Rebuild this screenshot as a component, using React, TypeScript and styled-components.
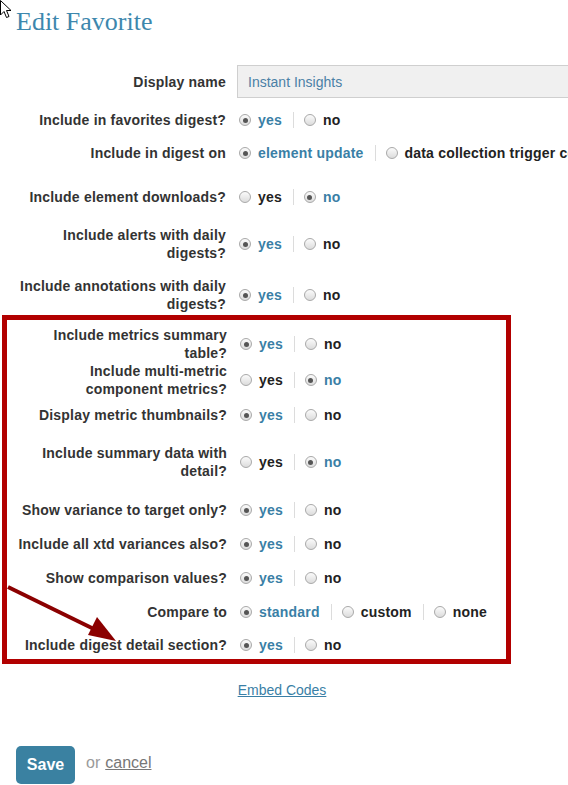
import styled, { createGlobalStyle } from 'styled-components';

const GlobalStyle = createGlobalStyle`
  html, body {
    margin: 0;
    padding: 0;
    background: #fff;
  }
  body {
    font-family: "Liberation Sans", Arial, sans-serif;
    color: #333;
  }
`;

const Page = styled.div`
  position: relative;
  width: 568px;
  height: 785px;
  overflow: hidden;
  background: #fff;
`;

const Title = styled.h1`
  margin: 0;
  padding: 6px 0 0 16px;
  font-family: "Liberation Serif", "Times New Roman", serif;
  font-weight: normal;
  font-size: 26px;
  line-height: 31px;
  color: #3d87ad;
`;

const Form = styled.div`
  margin-top: 28px;
`;

const Row = styled.div<{ $mt?: number; $inset?: boolean }>`
  display: grid;
  grid-template-columns: ${(p) => (p.$inset ? '220px' : '226px')} 1fr;
  align-items: center;
  margin-top: ${(p) => (p.$mt ?? 15)}px;
`;

const Label = styled.div<{ $inset?: boolean }>`
  box-sizing: border-box;
  padding-left: ${(p) => (p.$inset ? 6 : 12)}px;
  text-align: right;
  font-weight: bold;
  font-size: 14px;
  line-height: 18px;
  letter-spacing: 0.2px;
  color: #333;
`;

const Options = styled.div`
  display: flex;
  align-items: center;
  padding-left: 13px;
  white-space: nowrap;
  overflow: hidden;
`;

const Option = styled.label<{ $checked?: boolean }>`
  display: flex;
  align-items: center;
  font-weight: bold;
  font-size: 14px;
  line-height: 18px;
  letter-spacing: 0.2px;
  color: ${(p) => (p.$checked ? '#3a7fa6' : '#222')};
`;

const Radio = styled.span<{ $checked?: boolean }>`
  position: relative;
  box-sizing: border-box;
  width: 12px;
  height: 12px;
  margin-right: 7px;
  border-radius: 50%;
  border: 1px solid #a9a9a9;
  background: linear-gradient(#fbfbfb, #dcdcdc);
  &::after {
    content: '';
    display: ${(p) => (p.$checked ? 'block' : 'none')};
    position: absolute;
    left: 2.5px;
    top: 2.5px;
    width: 5px;
    height: 5px;
    border-radius: 50%;
    background: #555;
  }
`;

const Divider = styled.span`
  width: 1px;
  height: 16px;
  margin: 0 10px 0 11px;
  background: #dcdcdc;
`;

const TextInput = styled.div`
  box-sizing: border-box;
  margin-left: 11px;
  width: 360px;
  height: 33px;
  padding-left: 10px;
  display: flex;
  align-items: center;
  background: #f0f0f0;
  border: 1px solid #cfcfcf;
  font-size: 14px;
  color: #4a80a6;
`;

const Highlight = styled.div`
  box-sizing: border-box;
  margin: 2px 0 0 2px;
  width: 509px;
  border: 5px solid #b20000;
  padding-bottom: 5px;
`;

const EmbedLink = styled.a`
  display: block;
  margin: 17px 0 0 0;
  padding-right: 4px;
  text-align: center;
  font-size: 14px;
  line-height: 18px;
  color: #3a7fa6;
  text-decoration: underline;
`;

const Actions = styled.div`
  display: flex;
  align-items: center;
  margin: 47px 0 0 16px;
`;

const SaveButton = styled.button`
  width: 59px;
  height: 38px;
  margin-right: 11px;
  border: none;
  border-radius: 5px;
  background: #3a81a1;
  color: #fff;
  font-family: "Liberation Sans", Arial, sans-serif;
  font-weight: bold;
  font-size: 16px;
`;

const CancelText = styled.span`
  margin-bottom: 5px;
  font-size: 16px;
  color: #9a9a9a;
`;

const CancelLink = styled.a`
  margin-left: 5px;
  color: #777;
  text-decoration: underline;
`;

const Overlay = styled.svg`
  position: absolute;
  left: 0;
  top: 0;
  pointer-events: none;
`;

type Choice = { text: string; checked?: boolean };

type Field = {
  label: string;
  options: Choice[];
  mt?: number;
};

const yesNo = (yes: boolean): Choice[] => [
  { text: 'yes', checked: yes },
  { text: 'no', checked: !yes },
];

const topFields: Field[] = [
  { label: 'Include in favorites digest?', options: yesNo(true), mt: 13 },
  {
    label: 'Include in digest on',
    options: [
      { text: 'element update', checked: true },
      { text: 'data collection trigger completion' },
    ],
    mt: 15,
  },
  { label: 'Include element downloads?', options: yesNo(false), mt: 26 },
  { label: 'Include alerts with daily digests?', options: yesNo(true), mt: 20 },
  { label: 'Include annotations with daily digests?', options: yesNo(true), mt: 15 },
];

const boxFields: Field[] = [
  { label: 'Include metrics summary table?', options: yesNo(true), mt: 6 },
  { label: 'Include multi-metric component metrics?', options: yesNo(false), mt: 0 },
  { label: 'Display metric thumbnails?', options: yesNo(true), mt: 8 },
  { label: 'Include summary data with detail?', options: yesNo(false), mt: 20 },
  { label: 'Show variance to target only?', options: yesNo(true), mt: 21 },
  { label: 'Include all xtd variances also?', options: yesNo(true), mt: 16 },
  { label: 'Show comparison values?', options: yesNo(true), mt: 16 },
  {
    label: 'Compare to',
    options: [{ text: 'standard', checked: true }, { text: 'custom' }, { text: 'none' }],
    mt: 16,
  },
  { label: 'Include digest detail section?', options: yesNo(true), mt: 15 },
];

function FieldRow({ field, inset }: { field: Field; inset?: boolean }) {
  return (
    <Row $mt={field.mt} $inset={inset}>
      <Label $inset={inset}>{field.label}</Label>
      <Options>
        {field.options.map((o, i) => (
          <Option key={o.text} $checked={o.checked}>
            {i > 0 && <Divider />}
            <Radio $checked={o.checked} />
            {o.text}
          </Option>
        ))}
      </Options>
    </Row>
  );
}

export default function App() {
  return (
    <Page>
      <GlobalStyle />
      <Title>Edit Favorite</Title>

      <Form>
        <Row $mt={0}>
          <Label>Display name</Label>
          <TextInput>Instant Insights</TextInput>
        </Row>
        {topFields.map((f) => (
          <FieldRow key={f.label} field={f} />
        ))}

        <Highlight>
          {boxFields.map((f) => (
            <FieldRow key={f.label} field={f} inset />
          ))}
        </Highlight>
      </Form>

      <EmbedLink href="#">Embed Codes</EmbedLink>

      <Actions>
        <SaveButton>Save</SaveButton>
        <CancelText>
          or
          <CancelLink href="#">cancel</CancelLink>
        </CancelText>
      </Actions>

      {/* annotation arrow */}
      <Overlay width="568" height="785" viewBox="0 0 568 785">
        <line x1="8" y1="587" x2="100" y2="632" stroke="#8b0000" strokeWidth="4" />
        <polygon points="97,617 116,641 88,635" fill="#8b0000" />
      </Overlay>

      {/* mouse pointer */}
      <Overlay width="14" height="20" viewBox="0 0 14 20">
        <path d="M0.5 0.5 L0.5 15 L4 11.5 L6.5 17.5 L9 16.5 L6.5 10.5 L11 10.5 Z" fill="#fff" stroke="#000" strokeWidth="1" />
      </Overlay>
    </Page>
  );
}
